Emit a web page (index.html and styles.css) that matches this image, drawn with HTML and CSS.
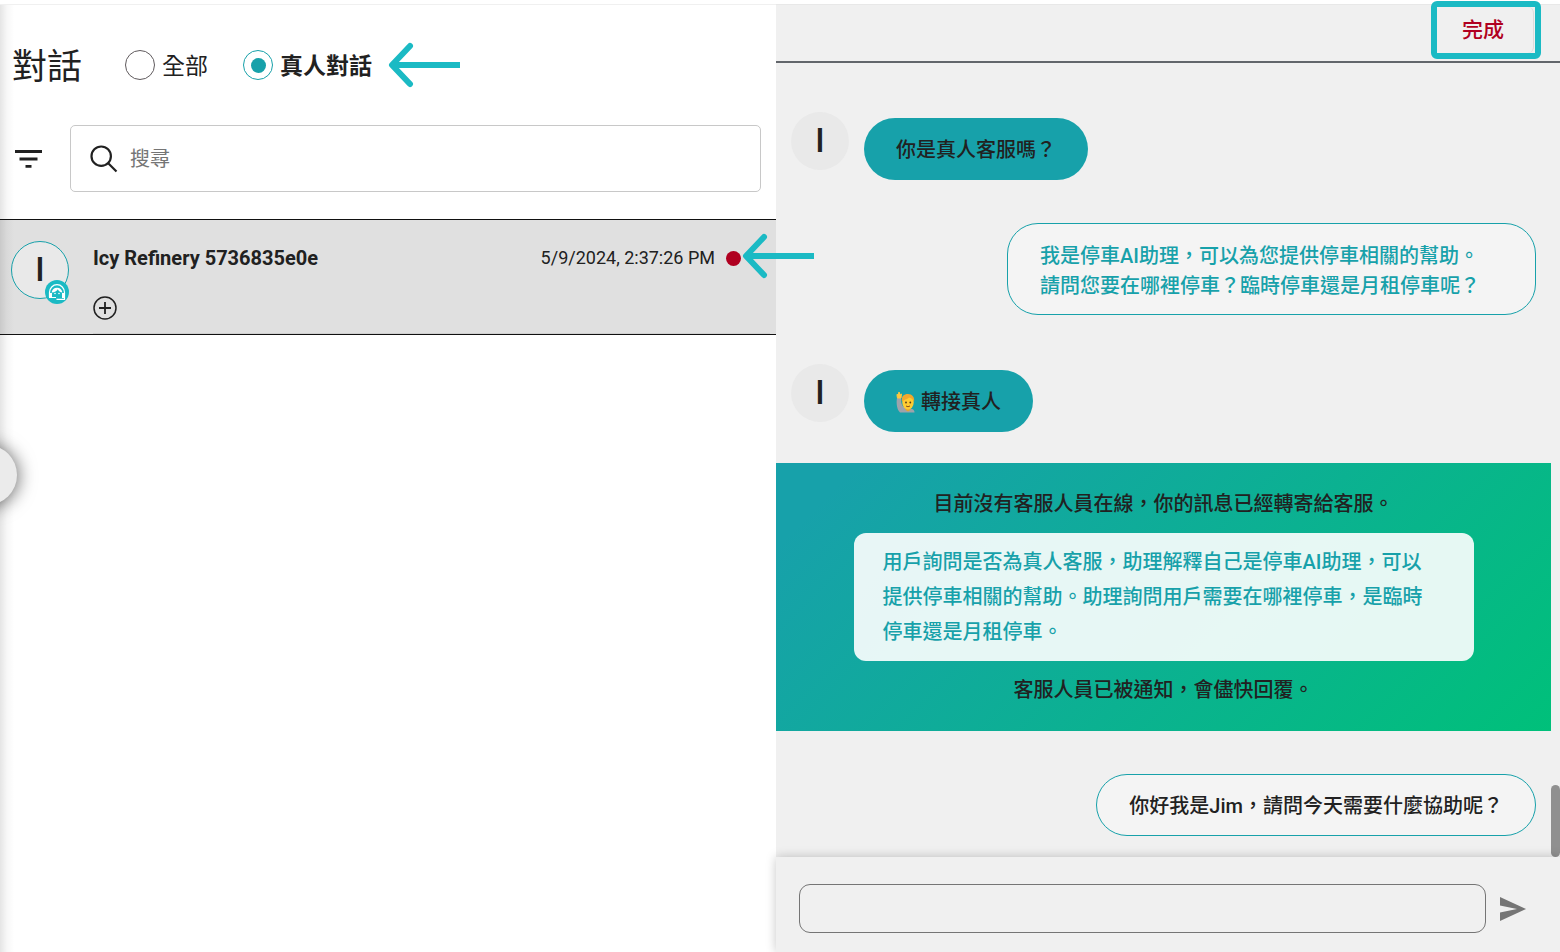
FILE: index.html
```html
<!DOCTYPE html>
<html lang="zh-Hant">
<head>
<meta charset="utf-8">
<title>對話</title>
<link rel="stylesheet" href="styles.css">
</head>
<body>
<div class="app">
  <section class="inbox">
    <header class="inbox-header">
      <h1 class="inbox-title">對話</h1>
      <label class="choice"><input type="radio" name="scope"><span>全部</span></label>
      <label class="choice choice-active"><input type="radio" name="scope" checked><span>真人對話</span></label>
      <svg class="arrow" viewBox="0 0 72 46" aria-hidden="true"><path d="M22 4L4 23L22 42"/><path class="shaft" d="M72 23H5"/></svg>
    </header>
    <div class="search-row">
      <button class="icon-button" aria-label="篩選">
        <svg width="28" height="20" viewBox="0 0 28 20"><path d="M0 2.500h27M4.500 10h18M10.500 17.300h6" fill="none" stroke="#212121" stroke-width="2.800"/></svg>
      </button>
      <label class="search">
        <svg width="28" height="28" viewBox="0 0 28 28"><g fill="none" stroke="#212121" stroke-width="2.200"><circle cx="11.200" cy="11.200" r="9.700"/><path d="M18 18l8.500 8.500"/></g></svg>
        <input type="text" placeholder="搜尋" aria-label="搜尋">
      </label>
    </div>
    <article class="thread">
      <div class="avatar avatar-outlined">I
        <svg class="agent-badge" viewBox="0 0 24 24" aria-hidden="true">
          <circle cx="12" cy="12" r="12" fill="#1bbac4"/>
          <path d="M4.500 17v-4.500a7.500 7.800 0 0 1 15 0V19.300H11.500" fill="none" stroke="#fff" stroke-width="1.200"/>
          <path d="M6.600 12.500a5.500 5.800 0 0 1 10.800 0c-2.200 0-3.800-1.300-4.600-3.200-.9 1.900-3.200 3.200-6.200 3.200z" fill="#fff"/>
          <path d="M4 13h3v5H4zM17 13h3v5h-3z" fill="#fff"/>
          <path d="M7 17.500h4" stroke="#fff" stroke-width="1"/>
          <circle cx="10" cy="13.500" r=".8" fill="#fff"/><circle cx="14" cy="13.500" r=".8" fill="#fff"/>
        </svg>
      </div>
      <div class="thread-body">
        <div class="thread-top">
          <h2 class="thread-name">Icy Refinery 5736835e0e</h2>
          <time class="thread-time">5/9/2024, 2:37:26 PM</time>
          <span class="unread"></span>
        </div>
        <button class="icon-button add-tag" aria-label="新增標籤">
          <svg width="24" height="24" viewBox="0 0 24 24"><g fill="none" stroke="#212121" stroke-width="1.500"><circle cx="12" cy="12" r="11"/><path d="M12 6v12M6 12h12" stroke-width="1.800"/></g></svg>
        </button>
      </div>
      <svg class="arrow arrow-unread" viewBox="0 0 72 46" aria-hidden="true"><path d="M22 4L4 23L22 42"/><path class="shaft" d="M72 23H5"/></svg>
    </article>
    <button class="drawer-handle" aria-label="展開"></button>
  </section>

  <section class="chat">
    <header class="chat-header">
      <button class="done">完成</button>
    </header>
    <div class="messages">
      <div class="message">
        <div class="avatar">I</div>
        <p class="bubble bubble-user">你是真人客服嗎？</p>
      </div>
      <div class="message message-out">
        <p class="bubble bubble-bot">我是停車AI助理，可以為您提供停車相關的幫助。<br>請問您要在哪裡停車？臨時停車還是月租停車呢？</p>
      </div>
      <div class="message message-handoff">
        <div class="avatar">I</div>
        <p class="bubble bubble-user">
          <svg class="emoji" viewBox="0 0 20 22" role="img" aria-label="舉手">
            <path d="M1 7l4-1c0 4 0 8 3 10l8 2c2 .5 2.500 2 2.500 3.500H4C1 19 0 12 1 7z" fill="#9da3ab"/>
            <path d="M1.500 7C1 5 .8 4 1.300 3l1 1L3 1l1.200 2.800L5.500 3 5 7z" fill="#ffc83d" stroke="#ffc83d"/>
            <path d="M9.500 15h5v4l-2.500 1.500L9.500 19z" fill="#e7a52d"/>
            <ellipse cx="12" cy="11.500" rx="5.700" ry="7" fill="#ffcc32"/>
            <path d="M6 11C5 5 8 3 12 3s7 3 6 8c-1-3-3-4-5-4.500C11 9 8 8 6 11z" fill="#f3a72c"/>
            <circle cx="10" cy="11.500" r=".9" fill="#543919"/><circle cx="14.300" cy="11.500" r=".9" fill="#543919"/>
            <path d="M10 15q2 1.500 4 0" fill="none" stroke="#8a5018" stroke-width="1"/>
          </svg>
          轉接真人</p>
      </div>
      <div class="notice">
        <p>目前沒有客服人員在線，你的訊息已經轉寄給客服。</p>
        <p class="summary">用戶詢問是否為真人客服，助理解釋自己是停車AI助理，可以提供停車相關的幫助。助理詢問用戶需要在哪裡停車，是臨時停車還是月租停車。</p>
        <p>客服人員已被通知，會儘快回覆。</p>
      </div>
      <div class="message message-out">
        <p class="bubble bubble-agent">你好我是Jim，請問今天需要什麼協助呢？</p>
      </div>
      <span class="scroll-thumb"></span>
    </div>
    <form class="composer">
      <input type="text" aria-label="訊息">
      <button type="button" class="icon-button" aria-label="傳送">
        <svg width="26" height="24" viewBox="0 0 26 24"><path d="M0 0L26 12L0 24V15.500L17 12L0 8.500z" fill="#757575"/></svg>
      </button>
    </form>
  </section>
</div>
</body>
</html>
```
FILE: styles.css
```css
* { box-sizing: border-box; }

body {
  margin: 0;
  background: #fff;
  color: #212121;
  font-family: Roboto, "Noto Sans CJK TC", sans-serif;
  font-size: 20px;
  line-height: 30px;
}

h1, h2, p { margin: 0; }
button, input { font: inherit; color: inherit; }
svg { display: block; }

.app {
  display: flex;
  min-height: 100vh;
  padding-top: 4px;
  overflow: hidden;
}

.inbox {
  position: relative;
  flex: 97 1 0;
  min-width: 0;
  border-top: 1px solid #f0f0f0;
}

/* Shade cast by the navigation drawer */
.inbox::before {
  content: "";
  position: absolute;
  z-index: 1;
  inset: 0 auto 0 0;
  width: 14px;
  background: linear-gradient(90deg, rgba(0, 0, 0, .1), rgba(0, 0, 0, .03) 50%, transparent);
}

.inbox-header {
  display: flex;
  align-items: center;
  height: 120px;
  padding-left: 12px;
}

.inbox-title {
  margin-right: 43px;
  padding-top: 6px;
  font-size: 35px;
  font-weight: 400;
}

.choice {
  display: flex;
  align-items: center;
  gap: 7px;
  margin-right: 35px;
  font-size: 23px;
}

.choice span { padding-top: 4px; }

.choice-active { margin-right: 16px; font-weight: 700; }

.choice input {
  display: grid;
  place-items: center;
  width: 30px;
  height: 30px;
  margin: 0;
  appearance: none;
  border: 1px solid #5f5a5d;
  border-radius: 50%;
}

.choice input:checked { border-color: #17a1aa; }

.choice input:checked::before {
  content: "";
  width: 15px;
  height: 15px;
  border-radius: 50%;
  background: #17a1aa;
}

.arrow {
  width: 72px;
  height: 46px;
  fill: none;
  stroke: #1bbac4;
  stroke-width: 6;
  stroke-linecap: round;
  stroke-linejoin: round;
}

.arrow .shaft { stroke-linecap: butt; }

.icon-button {
  padding: 0;
  border: 0;
  background: none;
}

.search-row {
  display: flex;
  align-items: center;
  gap: 27px;
  padding: 0 15px 27px;
}

.search {
  display: flex;
  flex: 1;
  align-items: center;
  gap: 12px;
  height: 67px;
  padding: 0 19px;
  border: 1px solid #c8c8c8;
  border-radius: 5px;
}

.search input {
  flex: 1;
  min-width: 0;
  padding: 0;
  border: 0;
  outline: 0;
  background: none;
}

.search input::placeholder { color: #757575; }

.thread {
  position: relative;
  display: flex;
  gap: 24px;
  height: 116px;
  padding: 21px 6px 0 11px;
  border-top: 1px solid #111;
  border-bottom: 1px solid #111;
  background: #e0e0e0;
}

.thread-body {
  flex: 1;
  border-bottom: 1px solid #d0d0d0;
}

.thread-top {
  display: flex;
  align-items: center;
  height: 34px;
  padding-right: 29px;
}

.thread-name {
  flex: 1;
  font-size: 20px;
  font-weight: 700;
}

.thread-time { margin-right: 11px; font-size: 18px; }

.unread {
  width: 15px;
  height: 15px;
  border-radius: 50%;
  background: #b00020;
}

.add-tag { margin-top: 21px; }

.arrow-unread {
  position: absolute;
  z-index: 3;
  top: 13px;
  right: -38px;
}

.avatar {
  position: relative;
  flex: none;
  width: 58px;
  height: 58px;
  border-radius: 50%;
  background: #e9e9e9;
  font-size: 33px;
  font-weight: 500;
  line-height: 58px;
  text-align: center;
}

.avatar-outlined { border: 1px solid #17a1aa; line-height: 56px; }

.agent-badge {
  position: absolute;
  right: -1px;
  bottom: -6px;
  width: 24px;
  height: 24px;
}

.drawer-handle {
  position: absolute;
  z-index: 2;
  top: 440px;
  left: -43px;
  width: 60px;
  height: 60px;
  border: 0;
  border-radius: 50%;
  background: #ebebeb;
  box-shadow: 1px 1px 18px rgba(0, 0, 0, .6);
}

.chat {
  display: flex;
  flex: 98 1 0;
  flex-direction: column;
  min-width: 0;
  border-top: 1px solid #e8e8e8;
  background: #f0f0f0;
}

.chat-header {
  display: flex;
  flex: none;
  justify-content: flex-end;
  height: 58px;
  padding-right: 19px;
  border-bottom: 2px solid #62666b;
}

.done {
  position: relative;
  width: 110px;
  height: 58px;
  margin-top: -4px;
  padding: 0 6px 0 0;
  border: 6px solid #1bbac4;
  border-radius: 6px;
  background: #f0f0f0;
  color: #b00020;
  font-size: 21px;
  font-weight: 500;
}

.done::after {
  content: "";
  position: absolute;
  inset: 0 1px 0 auto;
  width: 8px;
  border-right: 1px solid #dcdcdc;
  border-radius: 0 6px 6px 0;
}

.messages {
  position: relative;
  flex: 1;
  padding: 49px 9px 21px 0;
}

.message {
  display: flex;
  gap: 15px;
  padding: 0 15px;
}

.message .bubble-user { margin-top: 6px; }
.message-out { justify-content: flex-end; margin-top: 43px; }
.message-handoff { margin-top: 49px; }

.bubble {
  border-radius: 31px;
  font-weight: 500;
}

.bubble-user { padding: 17px 32px 15px; background: #17a1aa; }

.bubble-bot, .bubble-agent {
  border: 1px solid #17a1aa;
  background: #f4f4f4;
}

.bubble-bot {
  width: 71%;
  padding: 17px 32px 13px;
  color: #17a1aa;
}

.bubble-agent { padding: 16px 32px 14px; }

.emoji {
  display: inline-block;
  width: 20px;
  height: 22px;
  margin-top: -4px;
  vertical-align: middle;
}

.notice {
  display: flex;
  flex-direction: column;
  gap: 14px;
  align-items: center;
  margin-top: 31px;
  padding: 26px 0;
  background: linear-gradient(135deg, #17a1aa 8%, #00c07a);
  font-weight: 500;
}

.summary {
  width: 80%;
  padding: 12px 40px 11px 29px;
  border-radius: 12px;
  background: rgba(255, 255, 255, .9);
  color: #17a1aa;
  line-height: 35px;
}

.scroll-thumb {
  position: absolute;
  right: 0;
  bottom: 0;
  width: 9px;
  height: 72px;
  border-radius: 5px;
  background: #909090;
}

.composer {
  position: relative;
  display: flex;
  flex: none;
  gap: 14px;
  align-items: center;
  padding: 27px 34px 19px 23px;
  background: #f0f0f0;
  box-shadow: 0 0 10px rgba(0, 0, 0, .22);
}

.composer input {
  flex: 1;
  min-width: 0;
  height: 49px;
  padding: 0 16px;
  border: 1px solid #757575;
  border-radius: 11px;
  background: none;
}
```
